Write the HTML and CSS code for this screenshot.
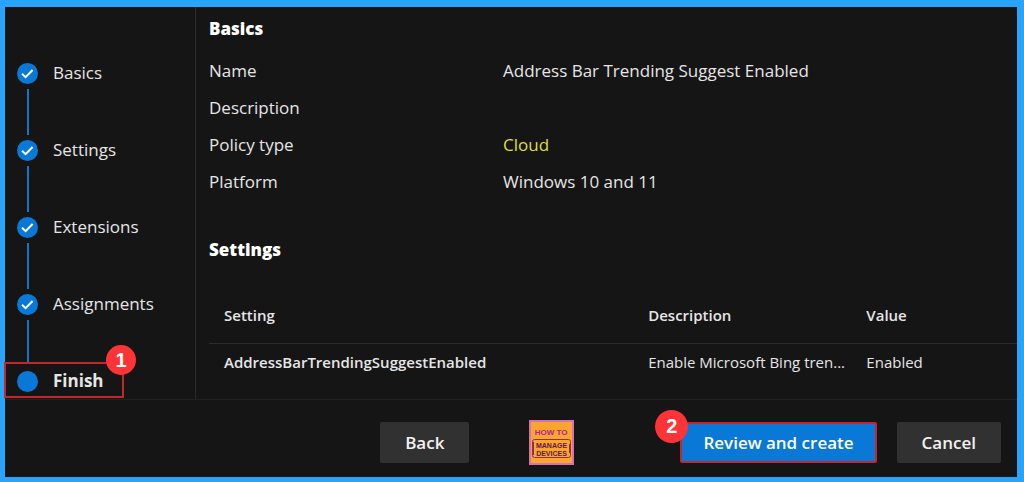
FILE: index.html
```html
<!DOCTYPE html>
<html lang="en">
<head>
  <meta charset="utf-8">
  <title>Create policy - Finish</title>
  <link rel="stylesheet" href="styles.css">
</head>
<body>
<div class="page">
  <div class="wizard">
    <!-- Steps -->
    <ol class="steps">
      <li class="step">
        <span class="marker"><svg class="dot" viewBox="0 0 21 21"><circle cx="10.5" cy="10.5" r="10.5"/><path d="M5 10.8l3.6 3.4 7-7.2"/></svg></span>
        <span class="label">Basics</span>
      </li>
      <li class="step">
        <span class="marker"><svg class="dot" viewBox="0 0 21 21"><circle cx="10.5" cy="10.5" r="10.5"/><path d="M5 10.8l3.6 3.4 7-7.2"/></svg></span>
        <span class="label">Settings</span>
      </li>
      <li class="step">
        <span class="marker"><svg class="dot" viewBox="0 0 21 21"><circle cx="10.5" cy="10.5" r="10.5"/><path d="M5 10.8l3.6 3.4 7-7.2"/></svg></span>
        <span class="label">Extensions</span>
      </li>
      <li class="step">
        <span class="marker"><svg class="dot" viewBox="0 0 21 21"><circle cx="10.5" cy="10.5" r="10.5"/><path d="M5 10.8l3.6 3.4 7-7.2"/></svg></span>
        <span class="label">Assignments</span>
      </li>
      <li class="step current">
        <span class="marker"><svg class="dot" viewBox="0 0 21 21"><circle cx="10.5" cy="10.5" r="10.5"/></svg></span>
        <span class="label">Finish</span>
        <span class="callout"><span class="badge">1</span></span>
      </li>
    </ol>

    <!-- Summary -->
    <main class="summary">
      <h2>Basics</h2>
      <dl class="details">
        <dt>Name</dt><dd>Address Bar Trending Suggest Enabled</dd>
        <dt>Description</dt><dd></dd>
        <dt>Policy type</dt><dd class="cloud">Cloud</dd>
        <dt>Platform</dt><dd>Windows 10 and 11</dd>
      </dl>

      <h2>Settings</h2>
      <table class="settings">
        <thead>
          <tr>
            <th class="col-setting">Setting</th>
            <th class="col-description">Description</th>
            <th>Value</th>
          </tr>
        </thead>
        <tbody>
          <tr>
            <td class="name">AddressBarTrendingSuggestEnabled</td>
            <td>Enable Microsoft Bing tren...</td>
            <td>Enabled</td>
          </tr>
        </tbody>
      </table>
    </main>
  </div>

  <!-- Buttons -->
  <footer class="actions">
    <button class="btn" type="button">Back</button>
    <svg class="logo" viewBox="0 0 45 45">
      <rect class="logo-edge" width="45" height="45"/>
      <rect class="logo-fill" x="2" y="2" width="41" height="41"/>
      <text class="logo-top" x="22" y="15" text-anchor="middle">HOW TO</text>
      <rect class="logo-box" x="3.5" y="19.5" width="38" height="18" rx="2"/>
      <path class="logo-mark" d="M41 24v9M4 22v13"/>
      <text class="logo-text" x="22.5" y="28" text-anchor="middle">MANAGE</text>
      <text class="logo-text" x="22.5" y="36" text-anchor="middle">DEVICES</text>
    </svg>
    <div class="create">
      <button class="btn primary" type="button">Review and create</button>
      <span class="badge">2</span>
    </div>
    <button class="btn" type="button">Cancel</button>
  </footer>
</div>
</body>
</html>
```
FILE: styles.css
```css
*{
  box-sizing: border-box;
}

body{
  margin:0;
  background:#151515;
  color:#e6e6e6;
  font-family: "Open Sans", "Segoe UI", sans-serif;
  font-size:17px;
  line-height:20px;
}

/* Blue frame around everything */
.page{
  display:flex;
  flex-direction:column;
  min-height:100vh;
  border: solid #2aa3fb;
  border-width: 7px 7px 5px 5px;
}

.wizard{
  display:flex;
  flex:1;
  border-bottom:1px solid #222;
}

/* Steps */
.steps{
  flex:none;
  width:191px;
  margin:0;
  padding:56px 0 0 12px;
  list-style:none;
  border-right:1px solid #2b2b2b;
}

.step{
  display:flex;
  gap:15px;
  height:77px;
  position:relative;
}

.step.current{
  height:28px;
  font-weight:700;
}

.marker{
  display:flex;
  flex-direction:column;
  align-items:center;
  width:21px;
}

/* line down to the next step */
.step:not(.current) .marker:after{
  content:"";
  flex:1;
  width:2px;
  margin:5px 0;
  background:#1674c2;
}

.step:nth-last-child(2) .marker:after{
  margin-bottom:8px;
}

.dot{
  display:block;
  flex:none;
  width:21px;
  height:21px;
}

.dot circle{
  fill:#0a78d6;
}

.dot path{
  fill:none;
  stroke:#fff;
  stroke-width:2;
}

/* Red markers */
.callout{
  position:absolute;
  left:-13px;
  top:-9px;
  width:120px;
  height:36px;
  border:2px solid #c3272c;
}

.badge{
  position:absolute;
  width:30px;
  height:30px;
  border-radius:50%;
  background:#fd3437;
  color:#fff;
  font:700 20px/30px "Liberation Sans", sans-serif;
  text-align:center;
}

.callout .badge{
  right:-14px;
  top:-19px;
}

/* Summary */
.summary{
  flex:1;
  min-width:0;
  padding:12px 0 0 13px;
}

h2{
  margin:0;
  font-size:17px;
  line-height:20px;
  font-weight:800;
  color:#fff;
}

.details{
  display:grid;
  grid-template-columns:294px 1fr;
  grid-auto-rows:37px;
  align-items:center;
  margin:13px 0 40px;
}

.details dd{
  margin:0;
}

.details .cloud{
  color:#dede3a;
}

.settings{
  width:100%;
  margin-top:27px;
  table-layout:fixed;
  border-collapse:collapse;
  font-size:15px;
}

.settings th,
.settings td{
  padding:0 0 0 15px;
  text-align:left;
  white-space:nowrap;
}

.settings th{
  height:56px;
  font-weight:600;
  border-bottom:1px solid #2b2b2b;
}

.settings td{
  height:38px;
}

.settings .name{
  font-weight:600;
}

.col-setting{
  width:52.5%;
}

.col-description{
  width:27%;
}

/* Buttons */
.actions{
  display:flex;
  justify-content:flex-end;
  align-items:center;
  gap:20px;
  height:77px;
  padding:8px 16px 0 0;
}

.btn{
  min-width:89px;
  height:41px;
  padding:0 25px;
  border:0;
  border-radius:2px;
  background:#313131;
  color:#f2f2f2;
  font-family:inherit;
  font-size:17px;
  font-weight:600;
}

.primary{
  padding:0 21px;
  border:2px solid #c3272c;
  background:#0a78d6;
  color:#fff;
}

.create{
  position:relative;
}

.create .badge{
  left:-25px;
  top:-12px;
  width:33px;
  height:33px;
  line-height:33px;
}

.logo{
  width:45px;
  height:45px;
  margin:0 86px 0 40px;
}

.logo-edge{
  fill:#d273b5;
}

.logo-fill{
  fill:#fba52f;
}

.logo-top{
  fill:#b3209a;
  font:700 8px "Liberation Sans", sans-serif;
}

.logo-text{
  fill:#5e1745;
  font:700 7px "Liberation Sans", sans-serif;
}

.logo-box,
.logo-mark{
  fill:none;
  stroke:#8a3150;
}

.logo-mark{
  stroke-width:2;
}
```
